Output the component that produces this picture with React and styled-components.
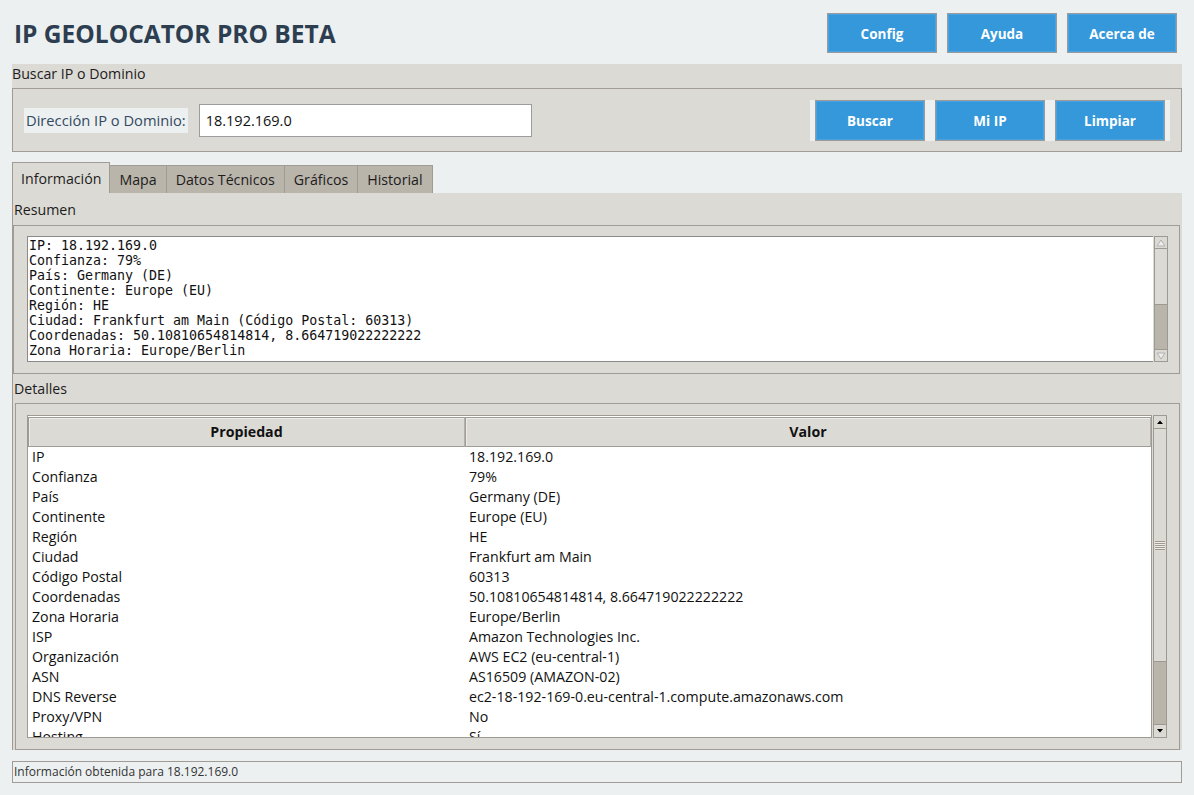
import React from 'react';
import styled, { createGlobalStyle } from 'styled-components';

const GlobalStyle = createGlobalStyle`
  body {
    margin: 0;
    background: #ecf0f1;
    font-family: "Open Sans", "Noto Sans", sans-serif;
    color: #1c1c1c;
  }
`;

const Page = styled.div`
  width: 1194px;
  height: 795px;
  box-sizing: border-box;
  padding: 0 12px;
  display: flex;
  flex-direction: column;
  overflow: hidden;
`;

const Header = styled.div`
  display: flex;
  justify-content: space-between;
  align-items: center;
  margin-top: 13px;
  height: 40px;
`;

const Title = styled.h1`
  margin: 0 0 0 2px;
  font-size: 24.5px;
  font-weight: 700;
  color: #2c3e50;
`;

const ButtonRow = styled.div`
  display: flex;
  gap: 10px;
  margin-right: ${p => p.$right || 0}px;
  background: ${p => p.$bg || 'transparent'};
  padding: 0 ${p => p.$pad || 0}px;
`;

const BlueButton = styled.button`
  width: 110px;
  height: ${p => p.$h || 40}px;
  box-sizing: border-box;
  background: #3498db;
  border: 1px solid #9a9a9a;
  box-shadow: inset 0 0 0 1px #4aa3df;
  color: #fff;
  font-family: "Open Sans", "Noto Sans", sans-serif;
  font-weight: 700;
  font-size: 13.5px;
  padding: 2px 0 0;
`;

const Group = styled.div`
  background: #dcdad5;
  margin-top: ${p => p.$top || 0}px;
`;

const GroupLabel = styled.div`
  height: ${p => p.$h || 24}px;
  line-height: ${p => p.$lh || 19}px;
  font-size: 14.2px;
  padding-left: ${p => p.$left || 0}px;
  box-sizing: border-box;
  padding-top: ${p => p.$pt || 0}px;
  color: #1c1c1c;
`;

const SearchBox = styled.div`
  height: 64px;
  box-sizing: border-box;
  border: 1px solid #a09c95;
  display: flex;
  align-items: center;
  padding-left: 11px;
`;

const FieldLabel = styled.div`
  background: #ecf0f1;
  color: #34495e;
  font-size: 14.7px;
  height: 25px;
  line-height: 25px;
  padding: 0 2px;
`;

const Entry = styled.div`
  width: 333px;
  height: 33px;
  box-sizing: border-box;
  margin-left: 11px;
  background: #fff;
  border: 1px solid #9c9c9c;
  font-size: 14.5px;
  line-height: 31px;
  padding-left: 6px;
  color: #111;
`;

const Spacer = styled.div`
  flex: 1;
`;

const Notebook = styled.div`
  margin-top: 11px;
  display: flex;
  flex-direction: column;
`;

const TabBar = styled.div`
  display: flex;
  align-items: flex-end;
  height: 30px;
  padding-left: 1px;
`;

const Tab = styled.div`
  box-sizing: border-box;
  height: ${p => (p.$active ? 31 : 28)}px;
  padding: 0 ${p => (p.$active ? 8 : 9)}px;
  background: ${p => (p.$active ? '#dcdad5' : '#bab5ab')};
  border: 1px solid #a09c95;
  border-bottom: none;
  margin-left: -1px;
  font-size: 14.2px;
  line-height: ${p => (p.$active ? 31 : 28)}px;
  color: #1c1c1c;
  position: relative;
  z-index: ${p => (p.$active ? 1 : 0)};
`;

const Pane = styled.div`
  background: #dcdad5;
  border-left: 1px solid #a09c95;
  height: 557px;
  box-sizing: border-box;
  padding: 7px 2px 0 0;
  display: flex;
  flex-direction: column;
`;

const Frame = styled.div`
  border: 1px solid #a09c95;
  margin-left: ${p => p.$left || 0}px;
  box-sizing: border-box;
  height: ${p => p.$h}px;
  flex-shrink: 0;
  padding: ${p => p.$pad};
  display: flex;
`;

const TextArea = styled.pre`
  flex: 1;
  margin: 0;
  background: #fff;
  border: 1px solid #8a8a8a;
  border-right: none;
  font-family: "DejaVu Sans Mono", "Liberation Mono", monospace;
  font-size: 13.3px;
  line-height: 15px;
  padding: 1px 1px;
  color: #111;
  overflow: hidden;
`;

const ScrollCol = styled.div`
  width: 14px;
  margin-left: ${p => p.$gap || 0}px;
  display: flex;
  flex-direction: column;
  background: #bab5ab;
  border: 1px solid #9e9a91;
  box-sizing: border-box;
`;

const ArrowBox = styled.div`
  height: ${p => p.$h}px;
  background: #dcdad5;
  border: 1px solid #9e9a91;
  box-sizing: border-box;
  display: flex;
  align-items: center;
  justify-content: center;
  margin: -1px;
`;

const Thumb = styled.div`
  height: ${p => p.$h}px;
  background: #dcdad5;
  border: 1px solid #9e9a91;
  box-sizing: border-box;
  margin: 0 -1px;
  display: flex;
  align-items: center;
  justify-content: center;
`;

const Grip = styled.div`
  width: 10px;
  height: 9px;
  background: repeating-linear-gradient(#9e9a91 0 1px, #eeece8 1px 2px);
`;

const Tree = styled.div`
  flex: 1;
  border: 1px solid #9e9a91;
  background: #fff;
  padding-top: 1px;
  display: flex;
  flex-direction: column;
  overflow: hidden;
`;

const TreeHead = styled.div`
  display: grid;
  grid-template-columns: 437px 1fr;
  height: 30px;
  background: #dcdad5;
  flex-shrink: 0;
`;

const HeadCell = styled.div`
  border: 1px solid #a09c95;
  border-right-color: #b5b1aa;
  text-align: center;
  font-weight: 700;
  font-size: 14.2px;
  line-height: 28px;
  color: #111;
  box-shadow: inset 1px 1px 0 #eeece8;
`;

const Row = styled.div`
  display: grid;
  grid-template-columns: 437px 1fr;
  height: 20px;
  line-height: 20px;
  font-size: 14.2px;
  color: #111;
  flex-shrink: 0;
  span {
    padding-left: 4px;
    white-space: nowrap;
  }
`;

const StatusBar = styled.div`
  margin-top: 11px;
  height: 22px;
  box-sizing: border-box;
  border: 1px solid #a09c95;
  background: #ecf0f1;
  font-size: 12px;
  line-height: 20px;
  padding-left: 1px;
  color: #333;
`;

const Arrow = ({ dir, hollow }) => (
  <svg width="10" height="8" viewBox="0 0 10 8">
    {hollow ? (
      <path
        d={dir === 'up' ? 'M1 7 L5 1 L9 7 Z' : 'M1 1 L5 7 L9 1 Z'}
        fill="#eeeeee"
        stroke="#b0b0b0"
        strokeWidth="1"
      />
    ) : (
      <path d={dir === 'up' ? 'M2 6 L5 2.5 L8 6 Z' : 'M2 2 L5 5.5 L8 2 Z'} fill="#000" />
    )}
  </svg>
);

const Scrollbar = ({ arrowH, thumbH, hollow, gap, grip }) => (
  <ScrollCol $gap={gap}>
    <ArrowBox $h={arrowH}>
      <Arrow dir="up" hollow={hollow} />
    </ArrowBox>
    <Thumb $h={thumbH}>{grip && <Grip />}</Thumb>
    <Spacer />
    <ArrowBox $h={arrowH}>
      <Arrow dir="down" hollow={hollow} />
    </ArrowBox>
  </ScrollCol>
);

const summary = [
  'IP: 18.192.169.0',
  'Confianza: 79%',
  'País: Germany (DE)',
  'Continente: Europe (EU)',
  'Región: HE',
  'Ciudad: Frankfurt am Main (Código Postal: 60313)',
  'Coordenadas: 50.10810654814814, 8.664719022222222',
  'Zona Horaria: Europe/Berlin',
];

const details = [
  ['IP', '18.192.169.0'],
  ['Confianza', '79%'],
  ['País', 'Germany (DE)'],
  ['Continente', 'Europe (EU)'],
  ['Región', 'HE'],
  ['Ciudad', 'Frankfurt am Main'],
  ['Código Postal', '60313'],
  ['Coordenadas', '50.10810654814814, 8.664719022222222'],
  ['Zona Horaria', 'Europe/Berlin'],
  ['ISP', 'Amazon Technologies Inc.'],
  ['Organización', 'AWS EC2 (eu-central-1)'],
  ['ASN', 'AS16509 (AMAZON-02)'],
  ['DNS Reverse', 'ec2-18-192-169-0.eu-central-1.compute.amazonaws.com'],
  ['Proxy/VPN', 'No'],
  ['Hosting', 'Sí'],
];

const tabs = ['Información', 'Mapa', 'Datos Técnicos', 'Gráficos', 'Historial'];

export default function App() {
  return (
    <>
      <GlobalStyle />
      <Page>
        <Header>
          <Title>IP GEOLOCATOR PRO BETA</Title>
          <ButtonRow $right={5}>
            <BlueButton>Config</BlueButton>
            <BlueButton>Ayuda</BlueButton>
            <BlueButton>Acerca de</BlueButton>
          </ButtonRow>
        </Header>

        <Group $top={11}>
          <GroupLabel>Buscar IP o Dominio</GroupLabel>
          <SearchBox>
            <FieldLabel>Dirección IP o Dominio:</FieldLabel>
            <Entry>18.192.169.0</Entry>
            <Spacer />
            <ButtonRow $right={11} $bg="#ecf0f1" $pad={5}>
              <BlueButton $h={41}>Buscar</BlueButton>
              <BlueButton $h={41}>Mi IP</BlueButton>
              <BlueButton $h={41}>Limpiar</BlueButton>
            </ButtonRow>
          </SearchBox>
        </Group>

        <Notebook>
          <TabBar>
            {tabs.map((t, i) => (
              <Tab key={t} $active={i === 0}>{t}</Tab>
            ))}
          </TabBar>
          <Pane>
            <GroupLabel $h={25} $lh={20} $left={1}>Resumen</GroupLabel>
            <Frame $h={149} $pad="10px 11px 11px 13px">
              <TextArea>{summary.join('\n')}</TextArea>
              <Scrollbar arrowH={13} thumbH={57} hollow gap={1} />
            </Frame>
            <GroupLabel $h={29} $lh={20} $pt={5} $left={1}>Detalles</GroupLabel>
            <Frame $h={347} $pad="11px 12px 11px 11px" $left={2}>
              <Tree>
                <TreeHead>
                  <HeadCell>Propiedad</HeadCell>
                  <HeadCell>Valor</HeadCell>
                </TreeHead>
                {details.map(([k, v]) => (
                  <Row key={k}>
                    <span>{k}</span>
                    <span>{v}</span>
                  </Row>
                ))}
              </Tree>
              <Scrollbar arrowH={14} thumbH={234} gap={1} grip />
            </Frame>
          </Pane>
        </Notebook>

        <StatusBar>Información obtenida para 18.192.169.0</StatusBar>
      </Page>
    </>
  );
}
